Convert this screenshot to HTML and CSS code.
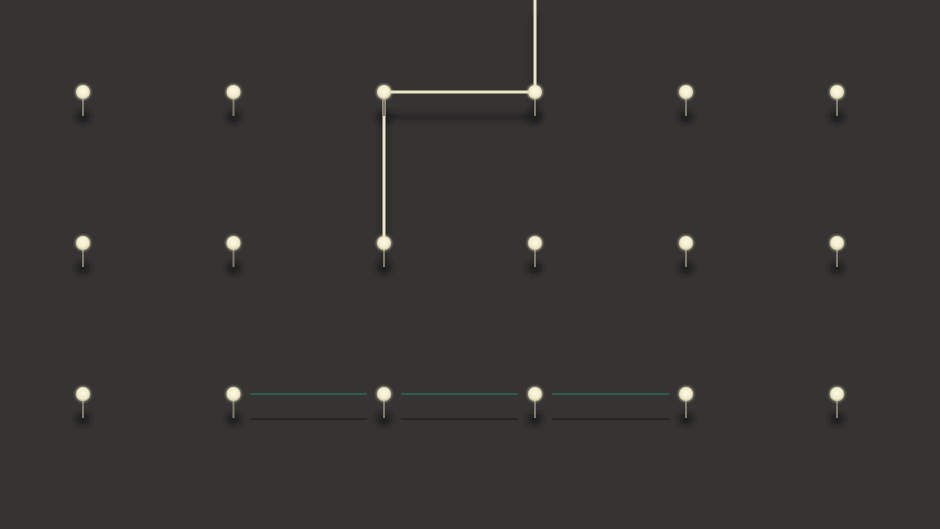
FILE: index.html
```html
<!DOCTYPE html>
<html lang="en">
<head>
    <meta charset="UTF-8">
    <meta name="viewport" content="width=device-width, initial-scale=1.0">
    <title>Pin Board</title>
    <link rel="stylesheet" href="styles.css">
</head>
<body>
    <div class="board">
        <svg id="board" width="940" height="529" viewBox="0 0 940 529">
            <defs>
                <filter id="soft" x="-50%" y="-50%" width="200%" height="200%">
                    <feGaussianBlur stdDeviation="2.5"/>
                </filter>
                <filter id="glow" x="-50%" y="-50%" width="200%" height="200%">
                    <feGaussianBlur stdDeviation="0.8"/>
                </filter>
                <radialGradient id="head" cx="50%" cy="45%" r="55%">
                    <stop offset="0%" stop-color="#fcf9e6"/>
                    <stop offset="65%" stop-color="#f2edcc"/>
                    <stop offset="100%" stop-color="#cdc7a6"/>
                </radialGradient>
            </defs>
            <g id="shadows"></g>
            <g id="threads"></g>
            <g id="pins"></g>
        </svg>
    </div>

    <script>
        const NS = 'http://www.w3.org/2000/svg';
        const cols = [83, 233.5, 384, 535, 686, 837];
        const rows = [92, 243, 394];
        const drop = 25;

        function el(tag, attrs, parent) {
            const node = document.createElementNS(NS, tag);
            for (const key in attrs) node.setAttribute(key, attrs[key]);
            parent.appendChild(node);
            return node;
        }

        const shadows = document.getElementById('shadows');
        const threads = document.getElementById('threads');
        const pins = document.getElementById('pins');

        // tight thread: runs off the top edge, across and down
        const tight = [[535, -10], [535, 92], [384, 92], [384, 243]];
        const pts = tight.map(p => p.join(',')).join(' ');
        const shadowPts = tight.map(p => p[0] + ',' + (p[1] + drop)).join(' ');
        el('polyline', { points: shadowPts, class: 'thread-shadow', filter: 'url(#soft)' }, shadows);
        el('polyline', { points: pts, class: 'thread' }, threads);

        // loose thread along the bottom row
        for (let i = 1; i < 4; i++) {
            const x1 = cols[i] + 17, x2 = cols[i + 1] - 17, y = rows[2];
            el('line', { x1: x1, y1: y + drop, x2: x2, y2: y + drop, class: 'slack-shadow' }, shadows);
            el('line', { x1: x1, y1: y, x2: x2, y2: y, class: 'slack' }, threads);
        }

        rows.forEach(function(y) {
            cols.forEach(function(x) {
                el('ellipse', { cx: x, cy: y + drop, rx: 7.5, ry: 6.5, class: 'pin-shadow', filter: 'url(#soft)' }, shadows);
                el('line', { x1: x, y1: y + 6, x2: x, y2: y + 24, class: 'needle' }, pins);
                el('circle', { cx: x, cy: y, r: 8, class: 'pin-glow', filter: 'url(#glow)' }, pins);
                el('circle', { cx: x, cy: y, r: 7, class: 'pin-head' }, pins);
            });
        });
    </script>
</body>
</html>
```

FILE: styles.css
```css
body {
    margin: 0;
    padding: 0;
    background-color: #363433;
    overflow: hidden;
}
.board {
    width: 940px;
    height: 529px;
}
#board {
    display: block;
}
.thread {
    fill: none;
    stroke: #ece6c8;
    stroke-width: 3;
    stroke-linejoin: round;
}
.thread-shadow {
    fill: none;
    stroke: #242120;
    stroke-width: 6;
    opacity: 0.85;
}
.slack {
    stroke: #2f5a4d;
    stroke-width: 2;
}
.slack-shadow {
    stroke: #2c2322;
    stroke-width: 2;
}
.pin-shadow {
    fill: #1e1c1b;
    opacity: 0.9;
}
.needle {
    stroke: #7f7a6e;
    stroke-width: 2;
}
.pin-glow {
    fill: #e6e0bd;
    opacity: 0.55;
}
.pin-head {
    fill: url(#head);
}
```
